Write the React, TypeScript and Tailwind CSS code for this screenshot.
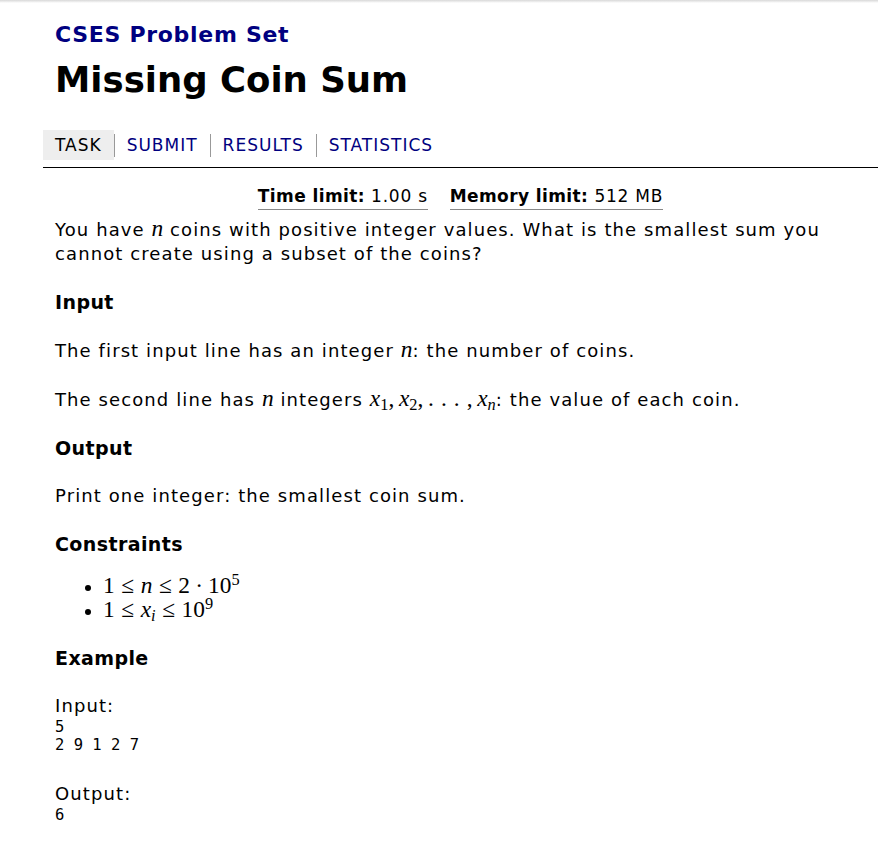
import React from 'react';

const sans = { fontFamily: '"DejaVu Sans", Verdana, sans-serif' };

function M({ children }: { children: React.ReactNode }) {
  return (
    <span className="font-['Liberation_Serif',serif] text-[1.3em] leading-none tracking-normal whitespace-nowrap">
      {children}
    </span>
  );
}

function V({ children }: { children: React.ReactNode }) {
  return <i className="inline-block">{children}</i>;
}

function Sub({ children }: { children: React.ReactNode }) {
  return <sub className="inline-block text-[0.7em] not-italic">{children}</sub>;
}

function Rel({ children }: { children: React.ReactNode }) {
  return <span className="mx-[0.28em]">{children}</span>;
}

function NavItem({ label, active, last }: { label: string; active?: boolean; last?: boolean }) {
  return (
    <div className="flex items-center">
      <span
        className={
          active
            ? 'bg-[#eeeeee] px-[12px] py-[4px] text-black'
            : 'px-[12px] py-[4px] text-[#000080]'
        }
      >
        {label}
      </span>
      {!last && <span className="h-[23px] w-px bg-[#999]" />}
    </div>
  );
}

export default function App() {
  return (
    <div className="min-h-[863px] bg-white text-black" style={sans}>
      <div className="h-[3px] bg-gradient-to-b from-[#d8d8d8] to-white" />
      <div className="pl-[43px]">
        <div className="pl-[12px] pt-[18px]">
          <div className="text-[22px] font-bold tracking-[0.7px] text-[#000080] leading-[28px]">CSES Problem Set</div>
          <h1 className="mt-[9px] text-[35.5px] font-bold leading-[44px]">Missing Coin Sum</h1>
        </div>

        <div className="mt-[28px] flex text-[17px] leading-[22px] tracking-[1px]">
          <NavItem label="TASK" active />
          <NavItem label="SUBMIT" />
          <NavItem label="RESULTS" />
          <NavItem label="STATISTICS" last />
        </div>
        <div className="mt-[7px] h-px bg-black" />

        <div className="pl-[12px] pr-[12px] text-[18px] leading-[24px] tracking-[1.1px]">
          <div className="mt-[16px] flex justify-center gap-[22px] text-[17px] leading-[24px] tracking-[0.75px]">
            <span className="border-b border-[#888] pb-[1px]">
              <b className="tracking-[0.4px]">Time limit:</b> 1.00 s
            </span>
            <span className="border-b border-[#888] pb-[1px]">
              <b className="tracking-[0.4px]">Memory limit:</b> 512 MB
            </span>
          </div>

          <p className="mt-[7px]">
            You have <M><V>n</V></M> coins with positive integer values. What is the smallest sum you
            cannot create using a subset of the coins?
          </p>

          <h2 className="mt-[24px] text-[19px] font-bold leading-[24px] tracking-[0.4px]">Input</h2>
          <p className="mt-[24px]">
            The first input line has an integer <M><V>n</V></M>: the number of coins.
          </p>
          <p className="mt-[24px]">
            The second line has <M><V>n</V></M> integers{' '}
            <M>
              <V>x</V><Sub>1</Sub>
              <span className="mr-[0.2em]">,</span>
              <V>x</V><Sub>2</Sub>
              <span className="mr-[0.2em]">,</span>
              <span className="tracking-[0.3em]">...</span>
              <span className="mr-[0.2em]">,</span>
              <V>x</V><Sub><V>n</V></Sub>
            </M>
            : the value of each coin.
          </p>

          <h2 className="mt-[24px] text-[19px] font-bold leading-[24px] tracking-[0.4px]">Output</h2>
          <p className="mt-[24px]">Print one integer: the smallest coin sum.</p>

          <h2 className="mt-[24px] text-[19px] font-bold leading-[24px] tracking-[0.4px]">Constraints</h2>
          <ul className="mt-[18px] list-disc pl-[48px] leading-[23px]">
            <li>
              <M>
                1<Rel>≤</Rel><V>n</V><Rel>≤</Rel>2<span className="mx-[0.22em]">·</span>10<sup className="text-[0.7em]">5</sup>
              </M>
            </li>
            <li>
              <M>
                1<Rel>≤</Rel><V>x</V><Sub><V>i</V></Sub><Rel>≤</Rel>10<sup className="text-[0.7em]">9</sup>
              </M>
            </li>
          </ul>

          <h2 className="mt-[24px] text-[19px] font-bold leading-[24px] tracking-[0.4px]">Example</h2>
          <p className="mt-[24px]">Input:</p>
          <pre className="font-['DejaVu_Sans_Mono',monospace] text-[15.5px] leading-[18px] tracking-normal">{'5\n2 9 1 2 7'}</pre>
          <p className="mt-[28px]">Output:</p>
          <pre className="font-['DejaVu_Sans_Mono',monospace] text-[15.5px] leading-[18px] tracking-normal">6</pre>
        </div>
      </div>
    </div>
  );
}
